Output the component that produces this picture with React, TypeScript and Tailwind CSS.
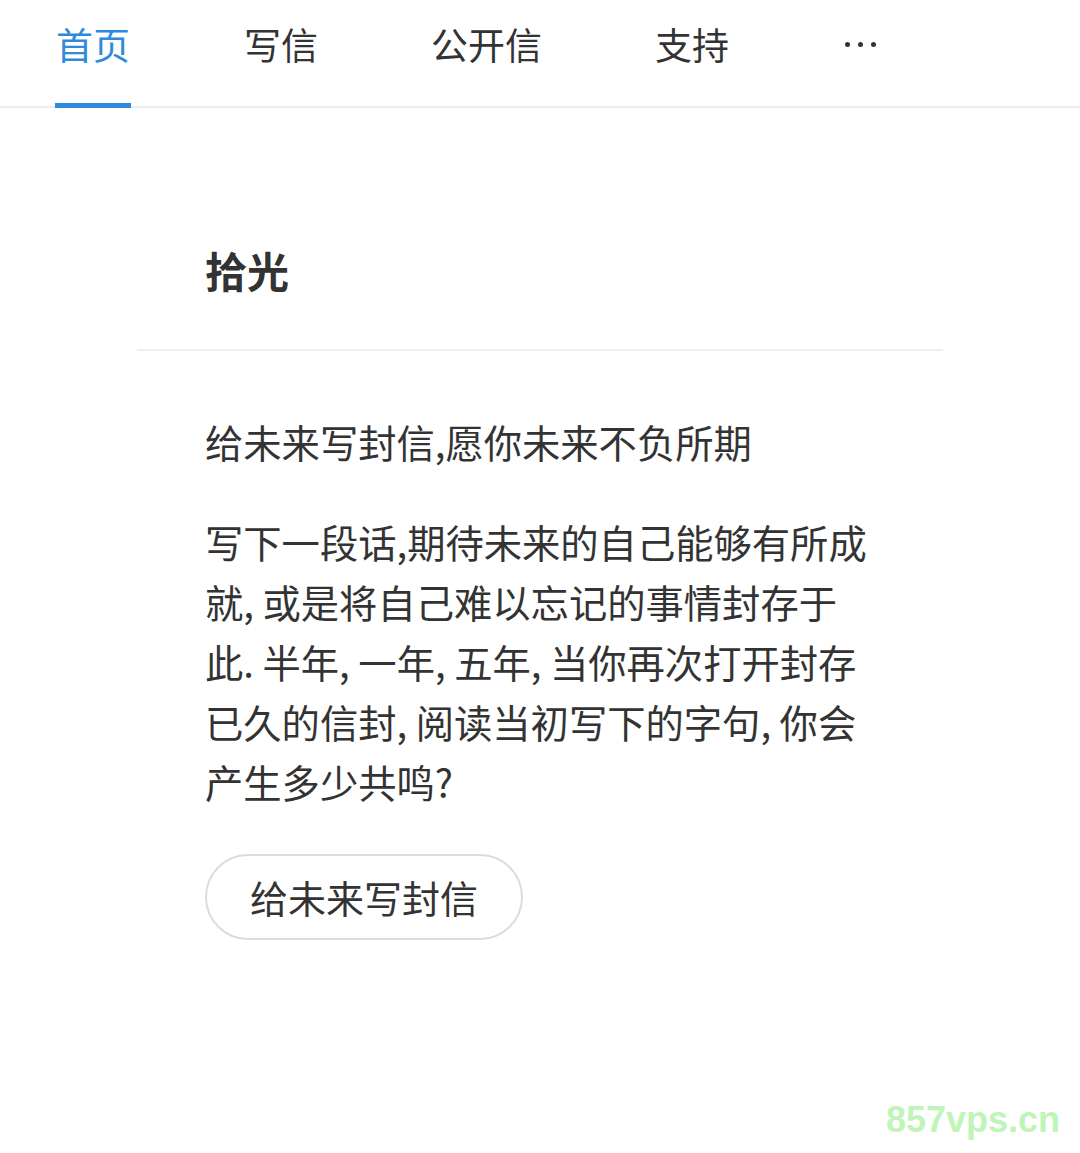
export default function App() {
  const tabs = ["首页", "写信", "公开信", "支持"];

  return (
    <div className="relative w-[1080px] h-[1153px] bg-white text-[#333] font-['Noto_Sans_CJK_SC',sans-serif]">
      <nav className="flex h-[108px] border-b-2 border-[#ededed] pl-[55px] gap-[113px]">
        {tabs.map((t, i) => (
          <div
            key={t}
            className={
              i === 0
                ? "flex items-start pt-[23px] text-[37px] leading-[42px] text-[#2f8bd9] border-b-[5px] border-[#2f8bd9] -mb-[2px] px-[1px]"
                : "flex items-start pt-[23px] text-[37px] leading-[42px] text-[#333]"
            }
          >
            {t}
          </div>
        ))}
        {/* more */}
        <div className="flex items-center gap-[8px] h-[88px] ml-[3px]">
          <span className="w-[5px] h-[5px] rounded-full bg-[#333]" />
          <span className="w-[5px] h-[5px] rounded-full bg-[#333]" />
          <span className="w-[5px] h-[5px] rounded-full bg-[#333]" />
        </div>
      </nav>

      <main className="mx-auto w-[806px]">
        <div className="pt-[141px] pb-[58px] px-[68px] border-b-2 border-[#eeeeee]">
          <h1 className="text-[42px] leading-[42px] font-semibold text-[#333]">拾光</h1>
        </div>

        <div className="px-[68px] pt-[61px]">
          <p className="text-[38.3px] leading-[60px]">给未来写封信,愿你未来不负所期</p>
          <p className="mt-[40px] text-[38.3px] leading-[60px]">
            写下一段话,期待未来的自己能够有所成<br />
            就, 或是将自己难以忘记的事情封存于<br />
            此. 半年, 一年, 五年, 当你再次打开封存<br />
            已久的信封, 阅读当初写下的字句, 你会<br />
            产生多少共鸣?
          </p>
          <button className="mt-[42px] h-[86px] px-[43px] rounded-full border-2 border-[#dcdcdc] bg-white text-[38px] leading-[38px] text-[#333]">
            给未来写封信
          </button>
        </div>
      </main>

      <div className="absolute right-[20px] bottom-[6px] text-[36px] font-bold text-[#bff5b8] font-['Liberation_Sans',sans-serif]">
        857vps.cn
      </div>
    </div>
  );
}
